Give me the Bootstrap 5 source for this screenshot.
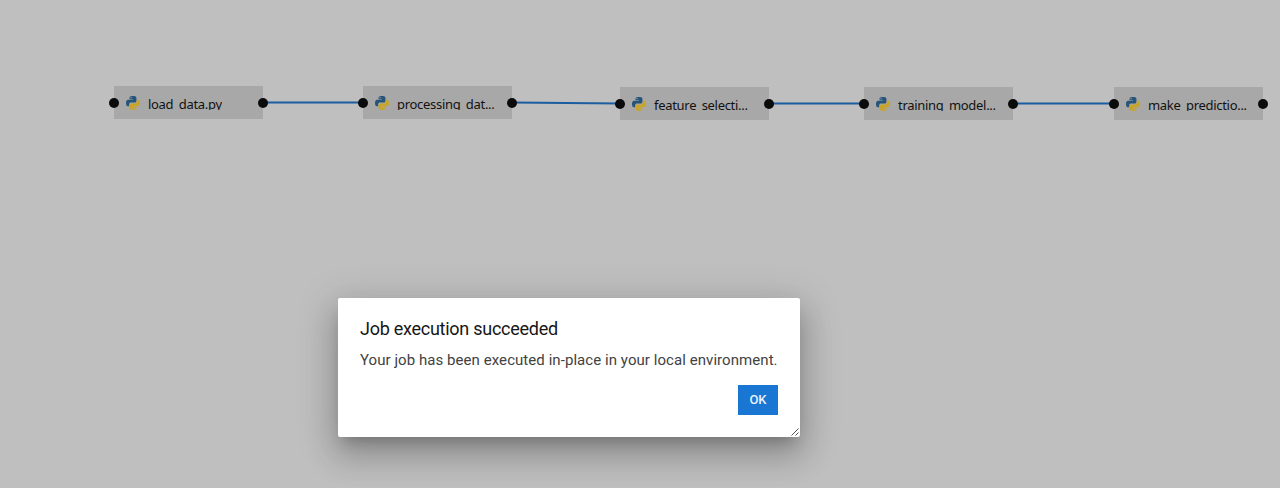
<!DOCTYPE html>
<html lang="en">
<head>
<meta charset="utf-8">
<meta name="viewport" content="width=device-width, initial-scale=1">
<title>Pipeline editor</title>
<link href="https://cdn.jsdelivr.net/npm/bootstrap@5.3.0/dist/css/bootstrap.min.css" rel="stylesheet">
<style>
  body { background: #bfbfbf; height: 488px; }
  .links { top: 0; left: 0; }
  .op-node { width: 149px; height: 33px; background: #a8a8a8; padding: 9px 12px 0 12px; gap: 7px; }
  .op-node::before, .op-node::after { content: ""; position: absolute; top: 11.5px; width: 10px; height: 10px; border-radius: 50%; background: #0b0b0b; }
  .op-node::before { left: -5px; }
  .op-node::after { right: -5px; }
  .op-node svg { width: 14px; height: 14px; flex: none; margin-top: .5px; }
  .op-label { font: 13px/16px "Noto Sans", sans-serif; letter-spacing: -.3px; color: #121212; height: 15px; padding-top: 1px; margin-left: 1px; }
  .job-dialog { left: 338px; top: 298px; width: 462px; height: 139px; padding: 20px 22px 22px; border-radius: 2px; box-shadow: 0 10px 13px -6px rgba(0,0,0,.2), 0 18px 31px 3px rgba(0,0,0,.16), 0 8px 38px 7px rgba(0,0,0,.13); }
  .job-title { font: 18px/22px Roboto, sans-serif; letter-spacing: -.26px; color: #161616; }
  .job-text { font: 15px/20px Roboto, sans-serif; letter-spacing: .06px; color: #424242; margin-top: 10px; white-space: nowrap; }
  .btn-ok { --bs-btn-bg: #1976d2; --bs-btn-color: #e8f2fc; font: 500 13px/30px Roboto, sans-serif; width: 40px; height: 30px; padding: 0; border: 0; }
  .grip { right: 1px; bottom: 1px; }
</style>
</head>
<body class="position-relative overflow-hidden m-0">
<svg class="d-none">
  <symbol id="py" viewBox="0 0 110 110">
    <path fill="#27557a" d="M54 0C27 0 28 12 28 12v13h27v4H18S0 27 0 55s16 26 16 26h9V68s-1-16 16-16h26s15 0 15-15V15S84 0 54 0zM40 8.500a5 5 0 1 1 0 10 5 5 0 0 1 0-10z"/>
    <path fill="#c7a52c" d="M56 110c27 0 26-12 26-12V85H55v-4h37s18 2 18-26-16-26-16-26h-9v13s1 16-16 16H43s-15 0-15 15v22s-2 15 28 15zM70 101.500a5 5 0 1 1 0-10 5 5 0 0 1 0 10z"/>
  </symbol>
</svg>
<main>
  <svg class="links position-absolute" width="1280" height="488" fill="none" stroke="#1c5d9f" stroke-width="2">
    <path d="M263 102.500H363M512 102.500L620 103.500M769 103.500H864M1013 103.500H1114"/>
  </svg>
  <div class="op-node d-flex position-absolute" style="left:114px;top:86px"><svg><use href="#py"/></svg><span class="op-label overflow-hidden text-nowrap">load_data.py</span></div>
  <div class="op-node d-flex position-absolute" style="left:363px;top:86px"><svg><use href="#py"/></svg><span class="op-label overflow-hidden text-nowrap">processing_dat...</span></div>
  <div class="op-node d-flex position-absolute" style="left:620px;top:87px"><svg><use href="#py"/></svg><span class="op-label overflow-hidden text-nowrap">feature_selecti...</span></div>
  <div class="op-node d-flex position-absolute" style="left:864px;top:87px"><svg><use href="#py"/></svg><span class="op-label overflow-hidden text-nowrap">training_model...</span></div>
  <div class="op-node d-flex position-absolute" style="left:1114px;top:87px"><svg><use href="#py"/></svg><span class="op-label overflow-hidden text-nowrap">make_predictio...</span></div>
</main>
<div class="job-dialog position-absolute bg-white d-flex flex-column" role="dialog">
  <h1 class="job-title m-0">Job execution succeeded</h1>
  <p class="job-text mb-0">Your job has been executed in-place in your local environment.</p>
  <button class="btn btn-primary btn-ok rounded-0 align-self-end mt-auto" type="button">OK</button>
  <svg class="grip position-absolute" width="8" height="8" stroke="#555" stroke-width="1"><path d="M0.500 7.500L7.500 0.500M4.500 7.500L7.500 4.500"/></svg>
</div>
<script src="https://cdn.jsdelivr.net/npm/bootstrap@5.3.0/dist/js/bootstrap.bundle.min.js"></script>
</body>
</html>
